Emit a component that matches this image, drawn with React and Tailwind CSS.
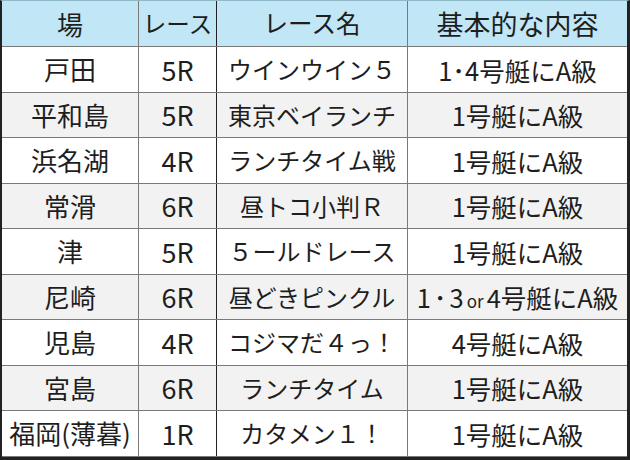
import React from "react";

const rows = [
  ["戸田", "5R", "ウインウイン５", <>1･4号艇にA級</>],
  ["平和島", "5R", "東京ベイランチ", "1号艇にA級"],
  ["浜名湖", "4R", "ランチタイム戦", "1号艇にA級"],
  ["常滑", "6R", "昼トコ小判Ｒ", "1号艇にA級"],
  ["津", "5R", "５ールドレース", "1号艇にA級"],
  ["尼崎", "6R", "昼どきピンクル", <>1<span className="px-[3px]">･</span>3<span className="text-[17px] px-[3px]">or</span>4号艇にA級</>],
  ["児島", "4R", "コジマだ４っ！", "4号艇にA級"],
  ["宮島", "6R", "ランチタイム", "1号艇にA級"],
  ["福岡(薄暮)", "1R", "カタメン１！", "1号艇にA級"],
];

const font = { fontFamily: '"Noto Sans CJK JP", "Noto Sans", sans-serif' };

function Row({ cells, bg, header }) {
  return (
    <div
      className={`flex border-b border-[#7a7a7a] ${bg} ${header ? "h-[46px]" : "h-[45.5px]"}`}
    >
      <div className="w-[137px] flex items-center justify-center border-r border-[#7a7a7a] whitespace-nowrap text-[26px]">
        <span>{cells[0]}</span>
      </div>
      <div className={`w-[78px] flex items-center justify-center border-r border-[#222] ${header ? "text-[23.5px]" : "text-[27px]"}`}>
        <span>{cells[1]}</span>
      </div>
      <div className={`w-[191px] flex items-center justify-center border-r border-[#7a7a7a] whitespace-nowrap ${header ? "text-[24.5px]" : "text-[24px]"}`}>
        <span>{cells[2]}</span>
      </div>
      <div className={`flex-1 flex items-center justify-center whitespace-nowrap ${header ? "text-[27px]" : "text-[25.5px]"}`}>
        <span>{cells[3]}</span>
      </div>
    </div>
  );
}

export default function App() {
  return (
    <div
      className="w-[630px] h-[460px] bg-white text-[#1e1e1e] leading-none overflow-hidden"
      style={font}
    >
      <div className="h-[460px] border-l-2 border-r-[3px] border-b-[3px] border-t border-t-[#8fb8c9] border-l-[#222] border-r-[#222] border-b-[#222]">
        <Row header bg="bg-[#c1e6f6]" cells={["場", "レース", "レース名", "基本的な内容"]} />
        {rows.map((r, i) => (
          <Row key={i} bg={i % 2 === 0 ? "bg-white" : "bg-[#f2f2f2]"} cells={r} />
        ))}
      </div>
    </div>
  );
}
